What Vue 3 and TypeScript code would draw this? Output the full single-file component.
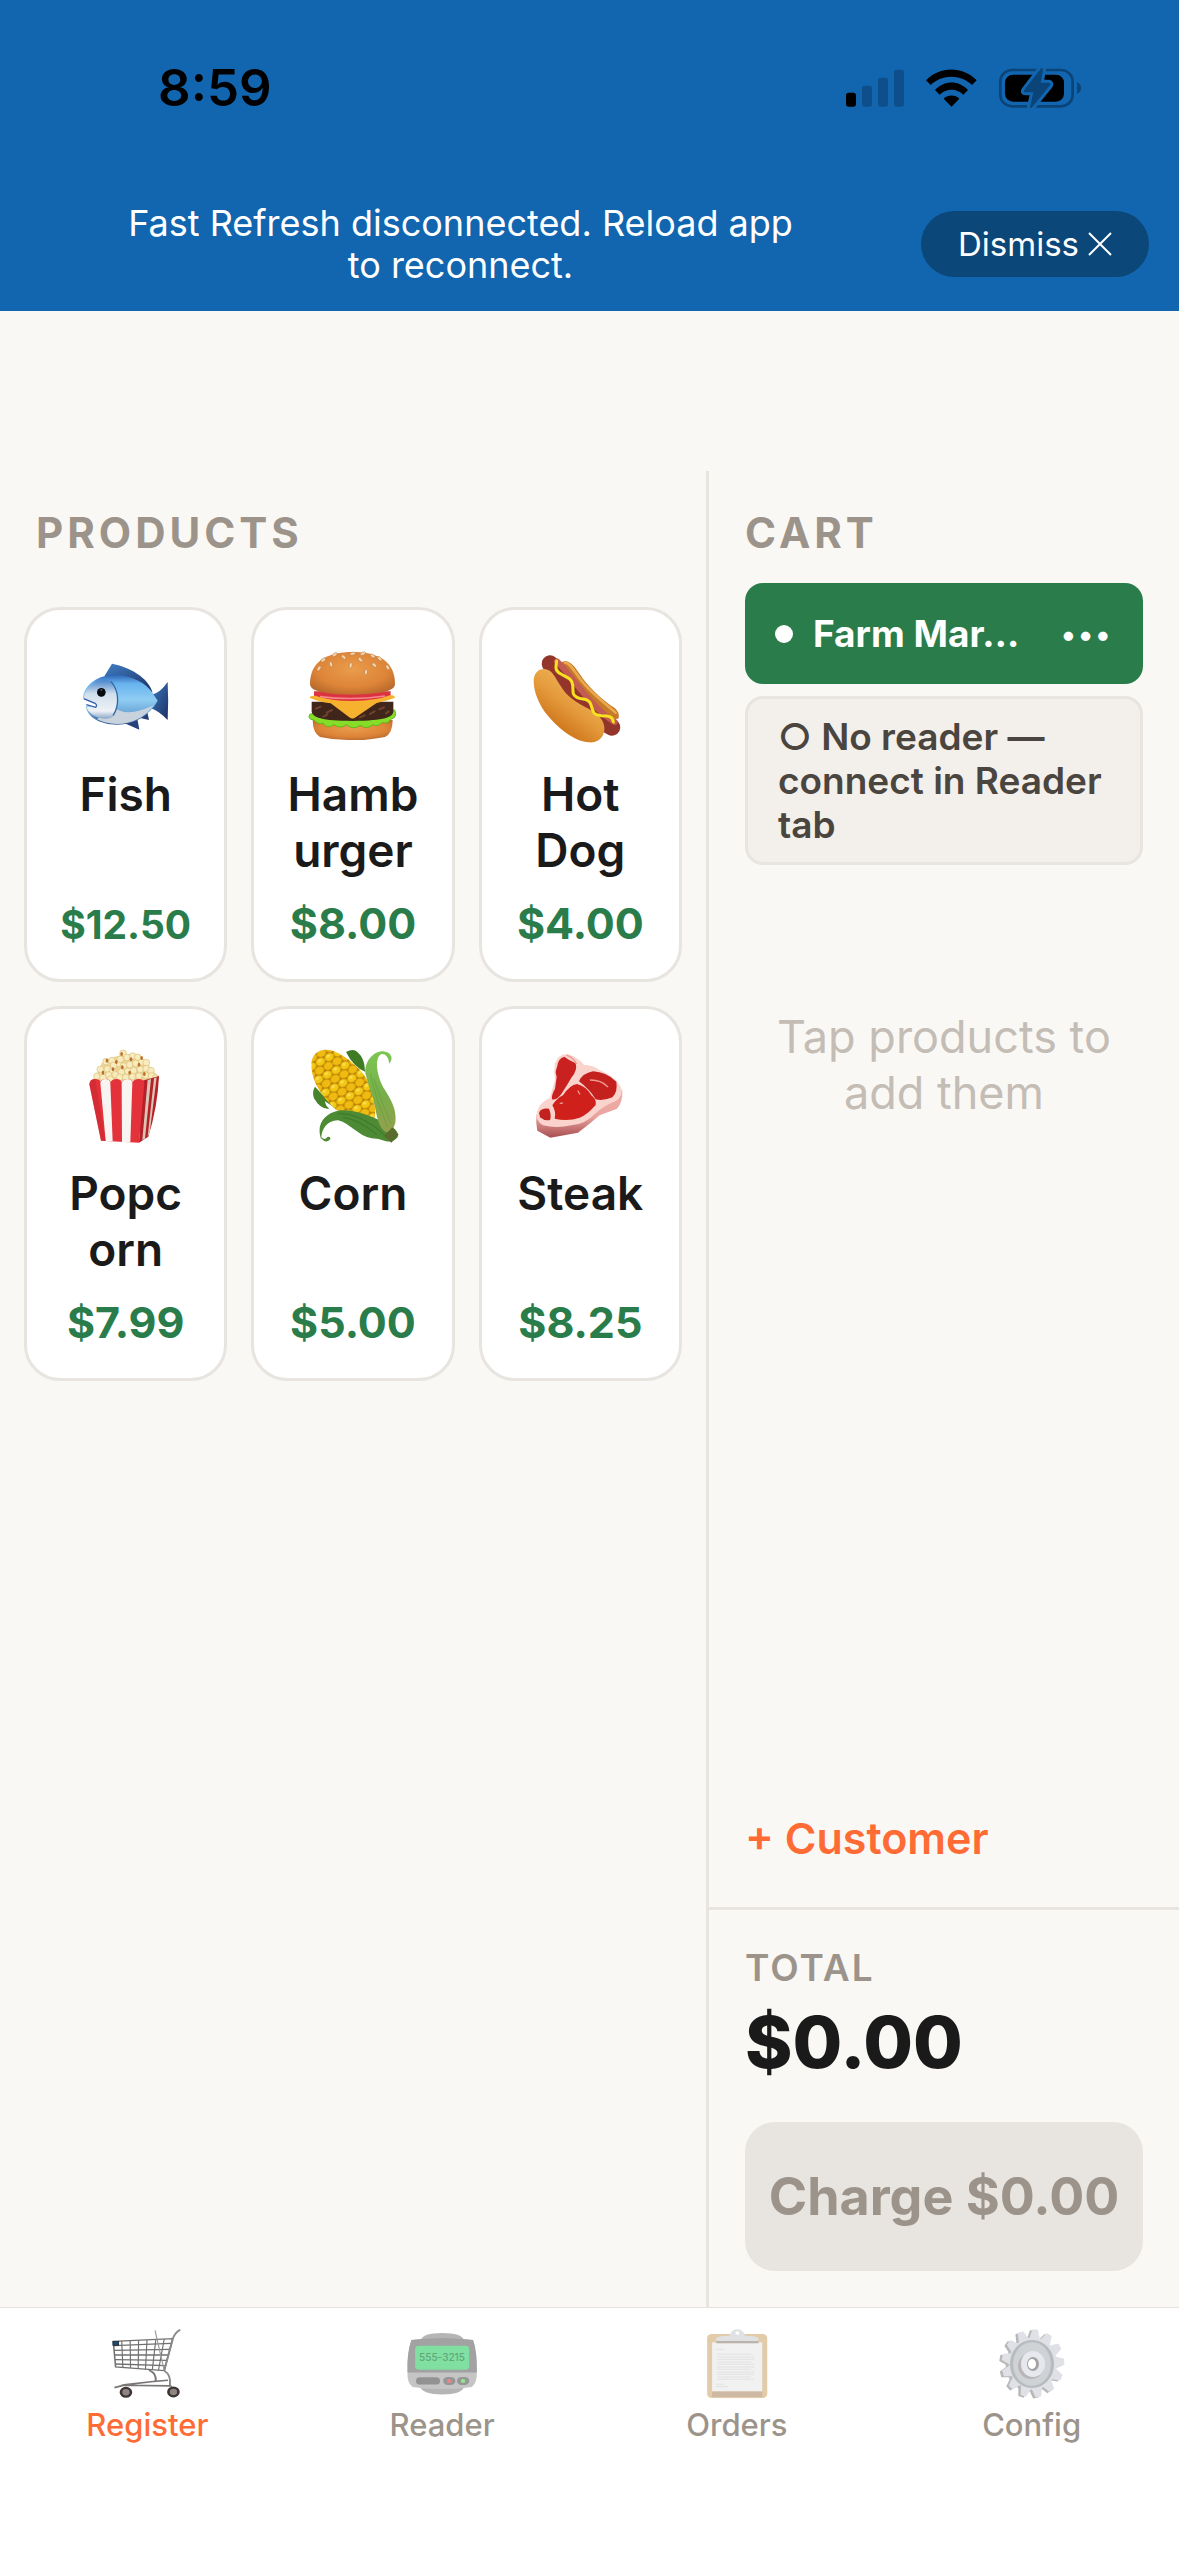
<script setup lang="ts">
interface Product {
  id: string
  name: string
  price: string
  view: string
  long?: boolean
}

interface Tab {
  id: string
  label: string
  active?: boolean
}

const products: Product[] = [
  { id: 'fish', name: 'Fish', price: '$12.50', view: '53 54 288 288', long: true },
  { id: 'burger', name: 'Hamburger', price: '$8.00', view: '735 54 288 288' },
  { id: 'hotdog', name: 'Hot Dog', price: '$4.00', view: '97 54 288 288' },
  { id: 'popcorn', name: 'Popcorn', price: '$7.99', view: '53 51 288 288' },
  { id: 'corn', name: 'Corn', price: '$5.00', view: '735 51 288 288' },
  { id: 'steak', name: 'Steak', price: '$8.25', view: '97 51 288 288' },
]

const tabs: Tab[] = [
  { id: 'register', label: 'Register', active: true },
  { id: 'reader', label: 'Reader' },
  { id: 'orders', label: 'Orders' },
  { id: 'config', label: 'Config' },
]

const kernels: [number, number][] = [
  [110, 139], [126, 127], [141, 117], [157, 122], [174, 100], [188, 70], [200, 82], [217, 78], [232, 82],
  [137, 95], [155, 92], [180, 88], [160, 106], [190, 108], [208, 104], [226, 100], [244, 96], [258, 98],
  [120, 118], [145, 135], [165, 134], [183, 126], [202, 124], [220, 122], [240, 118], [258, 116], [272, 122],
  [128, 143], [150, 148], [178, 142], [196, 142], [216, 140], [236, 138], [256, 136], [274, 138], [286, 144],
]
const specks: [number, number][] = [
  [140, 92], [184, 72], [212, 88], [128, 128], [158, 118], [186, 112], [208, 128], [236, 104], [252, 132], [244, 84], [168, 96],
]
const seeds: [number, number, number][] = [
  [790, 90, 50], [813, 103, -15], [777, 115, 35], [851, 81, -50], [872, 106, 8], [901, 89, -45], [918, 126, 8],
  [943, 105, -50], [824, 74, 60], [878, 71, 80], [909, 71, 70], [959, 86, -50], [983, 112, -30], [938, 78, -60],
]
const teeth: number[] = Array.from({ length: 13 }, (_, i) => (i * 360) / 13 + 4)
const textLines: number[] = [193, 201, 208, 216, 223, 231, 238, 246, 253, 261, 268]
</script>

<template>
  <div class="app">
    <header class="top">
      <div class="status">
        <time class="clock">8:59</time>
        <div class="status-icons">
          <svg width="58" height="42" viewBox="78 79 174 126" aria-hidden="true">
            <rect x="78" y="156" width="30" height="42" rx="8" fill="#000" />
            <g fill="#0e4f8b">
              <rect x="126" y="135" width="30" height="63" rx="8" />
              <rect x="174" y="111" width="30" height="87" rx="8" />
              <rect x="222" y="87" width="30" height="111" rx="8" />
            </g>
          </svg>
          <svg width="51" height="42" viewBox="318 79 153 126" aria-hidden="true">
            <path d="M318 119C360 76 428 76 470 119L456 133C422 100 366 100 332 133Z" />
            <path d="M345 148C373 118 416 118 444 148L430 162C410 142 379 142 359 162Z" />
            <path d="M371 174C384 161 405 161 418 174L394.500 198Z" />
          </svg>
          <svg width="82" height="42" viewBox="537 79 246 126" aria-hidden="true">
            <rect x="541" y="88" width="217" height="109" rx="35" fill="none" stroke="#0b4478" stroke-width="8" />
            <path d="M771 124C787 130 787 154 771 160Z" fill="#0b4478" />
            <rect x="555" y="102" width="177" height="81" rx="24" />
            <path d="M662 84L613 148Q609 155 616 155H640L630 198Q630 206 637 199L690 134Q693 127 686 126H662L669 88Q669 79 662 84Z" fill="#1166af" stroke="#1166af" stroke-width="18" stroke-linejoin="round" />
            <path d="M662 84L613 148Q609 155 616 155H640L630 198Q630 206 637 199L690 134Q693 127 686 126H662L669 88Q669 79 662 84Z" fill="#0b4478" />
          </svg>
        </div>
      </div>
      <div class="banner" role="status">
        <p class="banner-text">Fast Refresh disconnected. Reload app to reconnect.</p>
        <button class="dismiss" type="button">Dismiss
          <svg width="24" height="24" viewBox="0 0 24 24" aria-hidden="true"><path d="M1 1L23 23M23 1L1 23" stroke="#fff" stroke-width="2" fill="none" /></svg>
        </button>
      </div>
    </header>

    <main class="main">
      <section class="products">
        <h2 class="heading">PRODUCTS</h2>
        <div class="grid">
          <button v-for="p in products" :key="p.id" class="card" type="button">
            <svg class="emoji" :viewBox="p.view" aria-hidden="true">
              <template v-if="p.id === 'fish'">
                <defs>
                  <linearGradient id="fishBody" x1="0" y1="0" x2="0" y2="1">
                    <stop offset="0" stop-color="#2c62b4" /><stop offset=".18" stop-color="#68b3ee" />
                    <stop offset=".5" stop-color="#8fcdf3" /><stop offset=".75" stop-color="#6fa9d8" />
                    <stop offset="1" stop-color="#2d5590" />
                  </linearGradient>
                  <linearGradient id="fishFin" x1="0" y1="0" x2="1" y2="1">
                    <stop offset="0" stop-color="#3f7fc4" /><stop offset="1" stop-color="#1b2f63" />
                  </linearGradient>
                  <linearGradient id="fishFace" x1="0" y1="0" x2="0" y2="1">
                    <stop offset="0" stop-color="#4b86cb" /><stop offset=".35" stop-color="#cfdfec" />
                    <stop offset=".8" stop-color="#eef1f5" /><stop offset="1" stop-color="#8aa6c8" />
                  </linearGradient>
                </defs>
                <path d="M132 139L155 101C205 110 265 142 277 188C240 155 190 137 132 139Z" fill="url(#fishFin)" />
                <path d="M276 193C300 188 312 168 322 156Q325 212 322 270C305 252 288 240 268 233L288 212Z" fill="url(#fishFin)" />
                <path d="M193 280L237 299L231 266ZM240 264L266 270L261 246Z" fill="#24417a" />
                <path d="M68 204C72 162 115 134 165 134C215 135 258 160 276 188L292 212C266 258 222 284 170 284C120 284 80 262 77 228L108 232Q112 224 104 219Z" fill="url(#fishBody)" />
                <path d="M160 232C195 262 250 240 280 226C252 264 215 282 170 282C145 282 125 275 110 268Z" fill="#c9d3de" />
                <path d="M70 203C76 168 112 142 152 154C180 190 177 226 156 262C125 275 82 254 79 230L108 232Q112 224 104 219Z" fill="url(#fishFace)" />
                <path d="M152 154C178 185 177 228 158 257" fill="none" stroke="#2f68a5" stroke-width="4" />
                <circle cx="123" cy="187" r="13" fill="#070b10" /><circle cx="123" cy="180" r="3" fill="#555" />
                <path d="M70 206L104 220Q112 226 106 232L78 224" fill="none" stroke="#2d5fae" stroke-width="4" />
              </template>

              <template v-else-if="p.id === 'burger'">
                <defs>
                  <radialGradient id="bun" cx=".5" cy=".4" r=".65">
                    <stop offset="0" stop-color="#ea9c4c" /><stop offset=".65" stop-color="#dd8437" /><stop offset="1" stop-color="#b8692d" />
                  </radialGradient>
                </defs>
                <path d="M758 270H998Q998 310 975 321Q920 332 878 330Q830 332 780 321Q758 308 758 270Z" fill="url(#bun)" />
                <path d="M750 252Q740 268 762 270Q775 285 790 280Q800 298 822 284Q840 298 860 284Q880 302 900 286Q922 300 938 284Q952 292 966 278Q985 282 992 268Q1014 262 1004 240Z" fill="#86dd28" stroke="#5fb81c" stroke-width="3" />
                <path d="M755 215H1000V244C1000 262 975 272 878 273C785 273 756 262 755 244Z" fill="#40251a" />
                <path d="M768 236L782 230M800 248L816 240M930 252L944 244M958 238L972 232M900 262L914 256M978 250L986 244M790 260L802 254" stroke="#70432f" stroke-width="6" stroke-linecap="round" />
                <path d="M762 184H992V206Q960 216 878 216Q795 216 762 204Z" fill="#dc3340" />
                <path d="M780 200Q878 212 975 198" stroke="#f5868a" stroke-width="5" fill="none" />
                <path d="M750 204Q748 196 765 197Q820 214 878 213Q950 212 990 196Q1006 194 1004 204Q975 214 950 219L887 262Q878 269 868 262L812 220Q775 216 750 204Z" fill="#f6b22e" />
                <path d="M750 162C750 95 800 66 878 66C956 66 1005 95 1005 162C1005 184 960 192 878 194C795 193 750 184 750 162Z" fill="url(#bun)" />
                <ellipse v-for="(s, i) in seeds" :key="i" :cx="s[0]" :cy="s[1]" rx="4.500" ry="8.500" fill="#f1d5ae" stroke="#b9733a" stroke-width="1.500" :transform="`rotate(${s[2]} ${s[0]} ${s[1]})`" />
              </template>

              <template v-else-if="p.id === 'hotdog'">
                <defs>
                  <linearGradient id="roll" x1=".8" y1=".2" x2=".3" y2=".9">
                    <stop offset="0" stop-color="#f0b95c" /><stop offset=".5" stop-color="#e49a3b" /><stop offset="1" stop-color="#c96c14" />
                  </linearGradient>
                </defs>
                <path d="M184 98C205 84 222 104 240 132C262 168 310 212 345 234Q362 248 356 266L320 268L200 150Z" fill="#c77a27" />
                <path d="M196 98C212 98 224 125 244 150C270 185 315 220 348 248" stroke="#e8a94f" stroke-width="8" fill="none" stroke-linecap="round" />
                <path d="M151 101C210 150 240 240 337 292" stroke="#93352a" stroke-width="50" fill="none" stroke-linecap="round" />
                <path d="M172 94C225 145 265 225 345 276" stroke="#c25c52" stroke-width="18" fill="none" stroke-linecap="round" />
                <path d="M102 155C101 118 135 106 157 128C178 155 185 180 215 205C250 232 290 242 308 272C325 304 306 340 268 337C220 333 170 290 135 245C115 215 103 185 102 155Z" fill="url(#roll)" />
                <path d="M171 93C168 112 165 122 184 132C205 144 216 145 219 165C222 188 215 192 232 202C248 211 266 203 273 222C282 248 280 255 305 257C328 257 340 260 341 276" stroke="#f8e11d" stroke-width="9" fill="none" stroke-linecap="round" />
              </template>

              <template v-else-if="p.id === 'popcorn'">
                <path d="M98 152L112 126L124 100L150 84L180 76L188 60L198 72L232 72L246 90L264 98L272 122L292 134V152Z" fill="#ecd596" />
                <circle v-for="(k, i) in kernels" :key="i" :cx="k[0]" :cy="k[1]" r="10" fill="#f8ebbd" stroke="#dcbf77" stroke-width="2" />
                <ellipse v-for="(k, i) in specks" :key="`s${i}`" :cx="k[0]" :cy="k[1]" rx="4" ry="6" fill="#b9702c" />
                <path d="M246 152L296 138Q292 230 264 320L236 338Z" fill="#b5202a" />
                <path d="M262 150L272 147L254 326L246 330ZM281 145L289 142L268 308L262 320Z" fill="#d9c7b4" />
                <path d="M87 163Q88 147 104 147Q119 147 120 155Q124 147 135 147Q148 147 151 156Q156 147 168 147Q181 147 184 156Q190 147 201 147Q213 147 217 156Q222 147 235 147Q250 147 252 160L236 338L122 332Z" fill="#e4323a" />
                <path d="M120 158Q124 147 135 147Q148 147 150 158L157 334L136 333ZM184 158Q190 147 201 147Q214 147 216 158L210 337L185 336Z" fill="#f8f4f1" />
                <path d="M87 163Q90 148 104 147L136 333L122 332Z" fill="#c22430" opacity=".45" />
              </template>

              <template v-else-if="p.id === 'corn'">
                <defs>
                  <pattern id="kernel" width="30" height="44" patternUnits="userSpaceOnUse" patternTransform="rotate(-28)">
                    <rect width="30" height="44" fill="#b98208" />
                    <ellipse cx="15" cy="11" rx="14" ry="11.500" fill="#f4c713" />
                    <ellipse cx="0" cy="33" rx="14" ry="11.500" fill="#f0bb10" /><ellipse cx="30" cy="33" rx="14" ry="11.500" fill="#f0bb10" />
                    <ellipse cx="14" cy="7" rx="6" ry="3" fill="#fbe35a" />
                  </pattern>
                  <linearGradient id="husk" x1="0" y1="0" x2="0" y2="1">
                    <stop offset="0" stop-color="#7cc653" /><stop offset=".55" stop-color="#79ae49" /><stop offset="1" stop-color="#94a04d" />
                  </linearGradient>
                </defs>
                <path d="M858 66Q880 54 892 66Q915 85 915 125Q880 110 858 66Z" fill="#3f7b25" />
                <path d="M765 170Q755 185 762 205Q782 240 808 236Q796 228 795 214Q815 225 835 245Z" fill="#46832b" />
                <path d="M754 110C752 70 780 56 806 60C840 62 905 115 922 150C940 190 950 240 944 264C900 262 850 250 830 240C790 205 757 160 754 110Z" fill="url(#kernel)" />
                <path d="M782 324C770 285 790 250 840 241C885 236 950 262 992 290Q1016 298 1013 322Q1000 338 978 334Q955 325 935 325C895 318 870 280 835 271C800 270 785 300 784 322Q795 333 802 321Q812 318 811 328Q798 342 782 324Z" fill="#4c8a34" />
                <path d="M835 250Q905 250 975 316M850 262Q900 270 950 314" stroke="#356b22" stroke-width="2" fill="none" />
                <path d="M916 130C913 95 940 63 970 64Q998 68 994 90L988 101Q985 72 965 72C940 82 952 145 975 180C1000 220 1010 245 1006 278Q998 310 976 305C945 285 950 220 930 180Z" fill="url(#husk)" />
                <path d="M930 130Q948 210 983 292M941 145Q965 220 993 280" stroke="#609f3d" stroke-width="2" fill="none" />
                <path d="M972 318L997 292L1016 314L994 338Z" fill="#5b6b2b" />
              </template>

              <template v-else>
                <defs>
                  <linearGradient id="fat" x1="0" y1="0" x2="0" y2="1">
                    <stop offset="0" stop-color="#f2b0aa" /><stop offset=".6" stop-color="#e9a49f" /><stop offset="1" stop-color="#a84e50" />
                  </linearGradient>
                </defs>
                <path d="M110 255L165 195L350 165L368 182Q370 215 352 236L300 256Q270 282 235 308L152 323L113 302Q108 280 110 255Z" fill="url(#fat)" />
                <path d="M166 100Q176 72 204 72Q235 82 254 105Q284 106 300 120Q345 138 364 172Q372 196 350 212Q310 228 285 252Q258 282 215 286Q170 296 130 286Q105 270 112 245Q122 215 150 205L166 150Q162 120 166 100Z" fill="#f9d3cc" />
                <path d="M172 112Q175 84 194 80Q210 92 228 100Q234 122 216 142Q200 170 185 192Q170 212 157 208Q155 195 166 176L171 140Q165 125 172 112Z" fill="#c92120" />
                <path d="M158 226Q170 206 190 196Q210 165 232 162Q262 170 275 196Q292 210 288 225Q262 255 240 263Q205 275 165 266Q170 245 158 226Z" fill="#cf201b" />
                <path d="M238 154Q248 130 280 124Q320 126 350 155Q355 185 338 202Q310 214 288 208Q270 178 238 154Z" fill="#c4201e" />
                <path d="M118 248Q125 233 148 236Q156 255 151 270Q135 274 121 262Z" fill="#c1211f" />
                <path d="M202 76Q220 82 230 100M272 150Q305 150 324 170M182 220L188 219M235 183L240 192" stroke="#ef9892" stroke-width="4" fill="none" stroke-linecap="round" />
              </template>
            </svg>
            <span class="name">{{ p.name }}</span>
            <span class="price"><span :class="{ fit: p.long }">{{ p.price }}</span></span>
          </button>
        </div>
      </section>

      <aside class="cart">
        <div class="cart-top">
          <h2 class="heading">CART</h2>
          <div class="location">
            <span class="dot"></span>
            <span class="location-name">Farm Mar…</span>
            <button class="more" type="button" aria-label="More options">•••</button>
          </div>
          <p class="reader">○ No reader — connect in Reader tab</p>
          <p class="empty">Tap products to add them</p>
        </div>
        <button class="customer" type="button">+ Customer</button>
        <footer class="summary">
          <p class="total-label">TOTAL</p>
          <p class="total">$0.00</p>
          <button class="charge" type="button" disabled>Charge $0.00</button>
        </footer>
      </aside>
    </main>

    <nav class="tabs">
      <a v-for="t in tabs" :key="t.id" class="tab" :class="{ active: t.active }" :href="`#${t.id}`">
        <svg class="tab-icon" width="72" height="72" viewBox="0 0 72 72" aria-hidden="true">
          <g v-if="t.id === 'register'" transform="scale(.383 .333) translate(-291 -114)" fill="none" stroke="#707070" stroke-width="4">
            <path d="M297 154L452 146L430 242L303 231Z" />
            <path d="M298 167L448 160M299 181L445 178M300 195L441 195M301 209L438 211M302 222L434 227" />
            <path d="M319 153L322 233M341 152L342 234M363 151L362 236M385 150L381 238M408 149L399 239M430 147L415 241" stroke-width="3" />
            <path d="M406 121L430 242" stroke-width="3" stroke="#999" />
            <path d="M472 119Q460 125 453 144L430 242Q448 255 445 285L452 296" stroke="#888" stroke-width="5" />
            <path d="M390 240Q412 252 407 274L440 271M407 274L330 284L300 293M318 286L445 288" stroke-width="5" stroke="#7b7676" />
            <rect x="296" y="154" width="15" height="12" fill="#164c78" stroke="#222" stroke-width="2" />
            <circle cx="330" cy="307" r="13" fill="#8f8583" stroke="#3e3636" stroke-width="7" />
            <circle cx="454" cy="306" r="13" fill="#8f8583" stroke="#3e3636" stroke-width="7" />
          </g>
          <template v-else-if="t.id === 'reader'">
            <g transform="scale(.383 .333) translate(-1061 -114)">
              <path d="M1100 150Q1105 129 1155 129Q1207 129 1212 150ZM1097 290H1213Q1208 314 1155 314Q1105 314 1097 290Z" fill="#b5b5b5" />
              <path d="M1075 150Q1155 138 1236 150Q1248 190 1246 245Q1247 280 1233 291Q1155 304 1078 291Q1063 280 1065 245Q1063 190 1075 150Z" fill="#c5c5c5" />
              <path d="M1075 150Q1155 138 1236 150Q1246 180 1246 248H1065Q1063 190 1075 150Z" fill="#a2a2a2" />
              <rect x="1085" y="167" width="141" height="72" rx="10" fill="#80e0a2" />
              <rect x="1087" y="262" width="63" height="22" rx="11" fill="#929292" />
              <rect x="1158" y="261" width="32" height="24" rx="12" fill="#969696" /><rect x="1194" y="261" width="32" height="24" rx="12" fill="#969696" />
              <circle cx="1174" cy="273" r="6" fill="#e88989" /><circle cx="1210" cy="273" r="6" fill="#8fe889" />
            </g>
            <text x="36" y="33" font-size="10" font-family="Inter, sans-serif" text-anchor="middle" fill="#62a77b">555-3215</text>
          </template>
          <g v-else-if="t.id === 'orders'" transform="scale(.383 .333) translate(-316 -114)">
            <rect x="332" y="132" width="157" height="192" rx="12" fill="#e2cba9" />
            <rect x="345" y="304" width="131" height="17" fill="#cdb8a4" />
            <rect x="345" y="157" width="131" height="147" fill="#f1f1f1" />
            <path d="M356 178H377M356 283H376M356 290H388" stroke="#dadada" stroke-width="2" />
            <path v-for="(y, i) in textLines" :key="y" :d="`M358 ${y}H${i % 3 ? 455 : 447}`" stroke="#e2e2e2" stroke-width="3" />
            <path d="M356 154V145Q358 137 390 137Q397 117 411 117Q425 117 431 137Q464 137 466 145V154Z" fill="#dfe1e3" />
            <rect x="356" y="153" width="110" height="7" fill="#bdb3ad" /><circle cx="411" cy="129" r="5" fill="#fff" />
          </g>
          <g v-else>
            <g transform="translate(34.500 36.500) scale(.92 1)" fill="#b9b8b9">
              <path v-for="a in teeth" :key="a" d="M-6 -24L-3 -34H3L6 -24Z" :transform="`rotate(${a})`" />
              <circle r="27" />
            </g>
            <g transform="translate(37 35.500) scale(.92 1)" fill="#dfe1e6">
              <path v-for="a in teeth" :key="a" d="M-6 -24L-3 -34H3L6 -24Z" :transform="`rotate(${a})`" />
              <circle r="26" />
            </g>
            <ellipse cx="36" cy="36" rx="22" ry="24" fill="#b6babd" />
            <ellipse cx="36" cy="36" rx="19" ry="22" fill="#d0d3d6" stroke="#c3c7ca" stroke-width="1" />
            <ellipse cx="35" cy="38" rx="13" ry="13" fill="#b8b6b8" />
            <ellipse cx="37" cy="36" rx="12" ry="13" fill="#e6e8ed" />
            <ellipse cx="37" cy="36" rx="6" ry="7" fill="#a5a3a4" /><ellipse cx="36" cy="36" rx="4" ry="5" fill="#fff" />
          </g>
        </svg>
        <span>{{ t.label }}</span>
      </a>
    </nav>
  </div>
</template>

<style>
body {
  margin: 0;
  background: #faf8f5;
}
</style>

<style scoped>
.app {
  display: flex;
  flex-direction: column;
  min-height: 100vh;
  font-family: Inter, "Noto Sans", sans-serif;
  color: #1a1a1a;
  background: #faf8f5;
}
h2,
p {
  margin: 0;
}
button {
  font: inherit;
  color: inherit;
  border: 0;
  padding: 0;
  background: none;
}

.top {
  background: #1166af;
  padding-bottom: 25px;
}
.status {
  display: flex;
  justify-content: space-between;
  align-items: center;
  padding: 58px 98px 0 158px;
}
.clock {
  font-size: 51px;
  line-height: 60px;
  font-weight: 600;
  color: #000;
}
.status-icons {
  display: flex;
  gap: 22px;
}
.banner {
  display: flex;
  align-items: center;
  padding: 0 30px;
  margin-top: 84px;
  color: #fff;
}
.banner-text {
  flex: 1;
  padding: 0 90px;
  margin-right: 30px;
  text-align: center;
  font-size: 36px;
  line-height: 42px;
}
.dismiss {
  display: flex;
  align-items: center;
  gap: 9px;
  height: 66px;
  padding: 0 37px;
  border-radius: 33px;
  background: #0c477a;
  font-size: 33px;
  line-height: 40px;
}

.main {
  flex: 1;
  display: grid;
  grid-template-columns: 706fr 473fr;
  margin-top: 160px;
}
.heading {
  font-size: 42px;
  line-height: 52px;
  font-weight: 700;
  letter-spacing: 4px;
  color: #9c948a;
}
.products {
  padding: 36px 24px;
}
.products .heading {
  padding-left: 12px;
  margin-bottom: 48px;
}
.grid {
  display: grid;
  grid-template-columns: repeat(3, minmax(0, 1fr));
  gap: 24px;
}
.card {
  display: flex;
  flex-direction: column;
  align-items: center;
  padding: 38px 31px 30px;
  border: 3px solid #e8e4df;
  border-radius: 36px;
  background: #fff;
}
.emoji {
  width: 96px;
  height: 96px;
}
.name {
  width: 100%;
  min-height: 112px;
  margin-top: 22px;
  font-size: 46px;
  line-height: 56px;
  font-weight: 600;
  overflow-wrap: anywhere;
}
.price {
  margin-top: 19px;
  font-size: 43px;
  line-height: 52px;
  font-weight: 700;
  color: #2a7d4a;
}
.fit {
  font-size: 39px;
  line-height: 1;
}

.cart {
  display: flex;
  flex-direction: column;
  min-width: 0;
  border-left: 3px solid #e8e4df;
}
.cart-top {
  flex: 1;
  padding: 36px 36px 0;
}
.location {
  display: flex;
  align-items: center;
  margin-top: 24px;
  height: 101px;
  padding: 0 30px;
  box-sizing: border-box;
  border-radius: 18px;
  background: #2a7d4a;
  color: #fff;
  font-size: 37px;
  font-weight: 700;
}
.dot {
  flex: none;
  width: 18px;
  height: 18px;
  margin-right: 20px;
  border-radius: 50%;
  background: #fff;
}
.location-name {
  flex: 1;
  white-space: nowrap;
}
.more {
  font-size: 30px;
  letter-spacing: 3px;
}
.reader {
  margin-top: 12px;
  padding: 16px 30px 15px;
  border: 3px solid #e8e4df;
  border-radius: 18px;
  background: #f3efea;
  font-size: 37px;
  line-height: 44px;
  font-weight: 600;
  color: #4a453e;
}
.empty {
  padding: 144px 20px 0;
  text-align: center;
  font-size: 45px;
  line-height: 56px;
  color: #c4bdb5;
}
.customer {
  align-self: flex-start;
  padding: 0 36px 43px;
  font-size: 43px;
  line-height: 52px;
  font-weight: 600;
  color: #ff6b35;
}
.summary {
  padding: 36px;
  border-top: 3px solid #e8e4df;
}
.total-label {
  font-size: 37px;
  line-height: 44px;
  font-weight: 600;
  letter-spacing: 2px;
  color: #9c948a;
}
.total {
  margin-top: 8px;
  font-size: 72px;
  line-height: 88px;
  font-weight: 800;
}
.charge {
  display: block;
  width: 100%;
  height: 149px;
  margin-top: 36px;
  border-radius: 30px;
  background: #e8e4df;
  font-size: 52px;
  font-weight: 700;
  white-space: nowrap;
  color: #9c948a;
}

.tabs {
  display: flex;
  padding: 20px 0 113px;
  border-top: 1px solid #e5e3dc;
  background: #fff;
}
.tab {
  flex: 1;
  display: flex;
  flex-direction: column;
  align-items: center;
  gap: 7px;
  font-size: 31px;
  line-height: 36px;
  font-weight: 500;
  text-decoration: none;
  color: #9c948a;
}
.tab.active {
  color: #ff6b35;
}
</style>
